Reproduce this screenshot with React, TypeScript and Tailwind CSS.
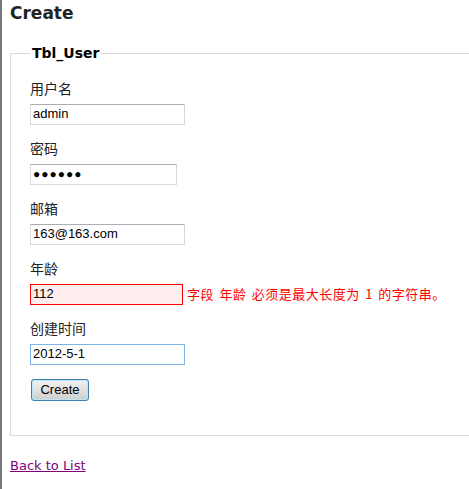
const LABEL_FONT = "font-['Microsoft_YaHei','Noto_Sans_CJK_SC',sans-serif]"

interface FieldProps {
  label: string
  value: string
  width: string
  variant?: 'normal' | 'error' | 'focus'
  password?: boolean
  error?: string
}

function Field({ label, value, width, variant = 'normal', password, error }: FieldProps) {
  const border =
    variant === 'error'
      ? 'border-[#ff0000] bg-[#ffeeee]'
      : variant === 'focus'
        ? 'border-[#7eb4ea] bg-white'
        : 'border-[#d6d9de] border-t-[#abadb3] bg-white'

  return (
    <div className="flex flex-col">
      <div className={`h-[20px] leading-[20px] text-[14px] text-[#222] ${LABEL_FONT}`}>{label}</div>
      <div className="mt-[5px] flex h-[22px] items-center">
        <div
          className={`flex h-[21px] items-center border px-[2px] ${width} ${border} font-['Liberation_Sans',Arial,sans-serif] text-[13px] text-black`}
        >
          {password ? (
            <span className="tracking-[1px] text-[12px]">●●●●●●</span>
          ) : (
            value
          )}
        </div>
        {error && (
          <span
            className={`ml-[4px] text-[13px] tracking-[0.5px] [word-spacing:2px] text-[#ff0000] ${LABEL_FONT} whitespace-nowrap`}
          >
            {error}
          </span>
        )}
      </div>
    </div>
  )
}

export default function App() {
  return (
    <div className="h-[489px] w-[469px] overflow-hidden border-l-2 border-[#777] bg-white pl-[8px]">
      <h2 className="h-[26px] font-['DejaVu_Sans',Verdana,sans-serif] text-[17px] font-bold leading-[26px] text-[#222]">
        Create
      </h2>

      <fieldset className="mt-[18px] h-[392px] w-[470px] border border-[#d9d9d9] pl-[19px] pt-[16px]">
        <legend className="px-[2px] font-['DejaVu_Sans',Verdana,sans-serif] text-[14px] font-bold leading-[18px] text-black">
          Tbl_User
        </legend>

        <div className="flex flex-col gap-[13px]">
          <Field label="用户名" value="admin" width="w-[155px]" />
          <Field label="密码" value="" width="w-[147px]" password />
          <Field label="邮箱" value="163@163.com" width="w-[155px]" />
          <Field
            label="年龄"
            value="112"
            width="w-[153px]"
            variant="error"
            error="字段 年龄 必须是最大长度为 1 的字符串。"
          />
          <Field label="创建时间" value="2012-5-1" width="w-[155px]" variant="focus" />
        </div>

        <button className="mt-[14px] ml-[1px] h-[22px] w-[58px] rounded-[3px] border border-[#3c7fb1] bg-gradient-to-b from-[#f2f2f2] to-[#cfcfcf] font-['Liberation_Sans',Arial,sans-serif] text-[13px] text-black shadow-[inset_0_0_0_1px_#bfe3f7]">
          Create
        </button>
      </fieldset>

      <div className="mt-[16px]">
        <a
          href="#"
          className="font-['DejaVu_Sans',Verdana,sans-serif] text-[13px] text-[#800080] underline"
        >
          Back to List
        </a>
      </div>
    </div>
  )
}
